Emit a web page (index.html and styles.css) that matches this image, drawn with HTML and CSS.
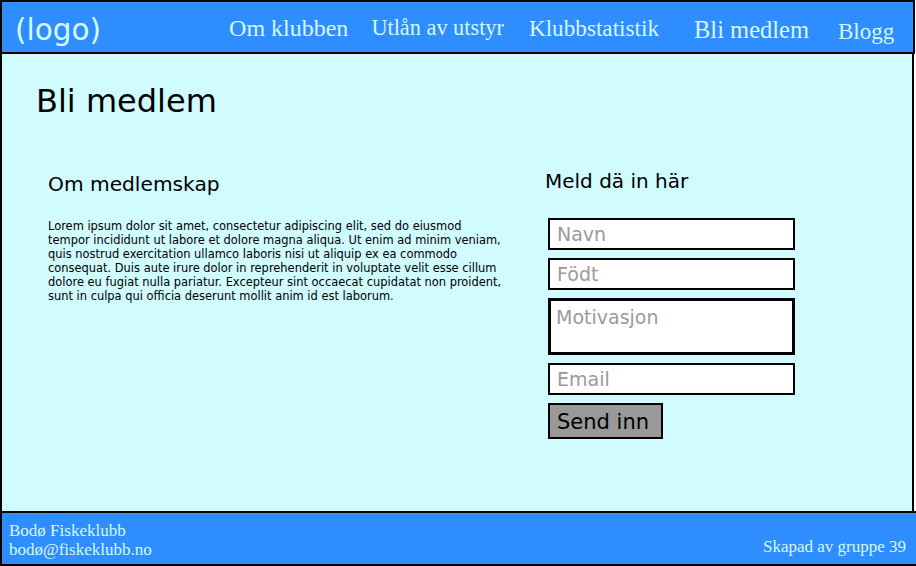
FILE: index.html
```html
<!DOCTYPE html>
<html lang="no">
<head>
<meta charset="utf-8">
<title>Bli medlem – Bodø Fiskeklubb</title>
<link rel="stylesheet" href="styles.css">
</head>
<body>
<div class="site">
  <header class="topbar">
    <div class="logo">(logo)</div>
    <nav class="nav">
      <a class="nav-link nav-om" href="#">Om klubben</a>
      <a class="nav-link nav-utlan" href="#">Utlån av utstyr</a>
      <a class="nav-link nav-stat" href="#">Klubbstatistik</a>
      <a class="nav-link nav-bli" href="#">Bli medlem</a>
      <a class="nav-link nav-blogg" href="#">Blogg</a>
    </nav>
  </header>
  <main class="content">
    <h1 class="page-title">Bli medlem</h1>
    <div class="columns">
      <section class="info">
        <h2 class="info-title">Om medlemskap</h2>
        <p class="info-text">Lorem ipsum dolor sit amet, consectetur adipiscing elit, sed do eiusmod tempor incididunt ut labore et dolore magna aliqua. Ut enim ad minim veniam, quis nostrud exercitation ullamco laboris nisi ut aliquip ex ea commodo consequat. Duis aute irure dolor in reprehenderit in voluptate velit esse cillum dolore eu fugiat nulla pariatur. Excepteur sint occaecat cupidatat non proident, sunt in culpa qui officia deserunt mollit anim id est laborum.</p>
      </section>
      <section class="signup">
        <h2 class="signup-title">Meld dä in här</h2>
        <form class="form">
          <input class="field" type="text" placeholder="Navn">
          <input class="field" type="text" placeholder="Födt">
          <textarea class="field field-area" placeholder="Motivasjon"></textarea>
          <input class="field" type="email" placeholder="Email">
          <button class="submit" type="button">Send inn</button>
        </form>
      </section>
    </div>
  </main>
  <footer class="footer">
    <div class="footer-info">
      <div>Bodø Fiskeklubb</div>
      <div>bodø@fiskeklubb.no</div>
    </div>
    <div class="footer-credit">Skapad av gruppe 39</div>
  </footer>
</div>
</body>
</html>
```

FILE: styles.css
```css
* { box-sizing: border-box; }

html, body {
  margin: 0;
  padding: 0;
  background: #ffffff;
}

body {
  font-family: "DejaVu Sans", Verdana, sans-serif;
  color: #000;
}

.site {
  width: 916px;
  height: 566px;
  display: flex;
  flex-direction: column;
}

/* Header */
.topbar {
  width: 915px;
  height: 54px;
  flex: 0 0 54px;
  background: #2e8eff;
  border: 2px solid #000;
  display: flex;
  align-items: flex-start;
  padding-left: 13px;
}

.logo {
  font-family: "DejaVu Sans", Verdana, sans-serif;
  font-size: 29.5px;
  line-height: 34px;
  color: #d6f8ff;
  margin-top: 11px;
}

.nav {
  display: flex;
  align-items: flex-start;
  margin-left: 128px;
}

.nav-link {
  font-family: "Liberation Serif", "Times New Roman", serif;
  color: #d6f8ff;
  text-decoration: none;
  line-height: 1;
  white-space: nowrap;
}

.nav-om { font-size: 24px; margin-top: 14px; }
.nav-utlan { font-size: 22.3px; margin-top: 15px; margin-left: 23px; }
.nav-stat { font-size: 23.2px; margin-top: 15px; margin-left: 25px; }
.nav-bli { font-size: 24.5px; margin-top: 16px; margin-left: 35px; }
.nav-blogg { font-size: 23px; margin-top: 18px; margin-left: 29px; }

/* Main */
.content {
  width: 914px;
  flex: 1 1 auto;
  background: #d0fbff;
  border-left: 2px solid #000;
  border-right: 2px solid #000;
  padding: 28px 0 0 34px;
}

.page-title {
  margin: 0;
  font-size: 32px;
  font-weight: normal;
  line-height: 38px;
}

.columns {
  display: grid;
  grid-template-columns: 457px 247px;
  column-gap: 40px;
  margin: 50px 0 0 12px;
  align-items: start;
}

.info { padding-top: 2px; }

.info-title {
  margin: 0;
  font-size: 20.2px;
  font-weight: normal;
  line-height: 24px;
}

.info-text {
  margin: 23px 0 0;
  font-size: 11.45px;
  line-height: 14.1px;
}

.signup-title {
  margin: 0;
  font-size: 20px;
  font-weight: normal;
  line-height: 22px;
}

.form {
  display: flex;
  flex-direction: column;
  align-items: flex-start;
  gap: 8px;
  margin: 26px 0 0 3px;
}

.field {
  width: 247px;
  height: 32px;
  border: 2px solid #000;
  background: #fff;
  font-family: "DejaVu Sans", Verdana, sans-serif;
  font-size: 19px;
  padding: 0 7px;
  margin: 0;
  outline: none;
  border-radius: 0;
}

.field::placeholder { color: #9a9a9a; opacity: 1; }

.field-area {
  height: 57px;
  border-width: 3px;
  padding: 5px;
  resize: none;
  overflow: hidden;
  line-height: 22px;
  display: block;
}

.submit {
  width: 115px;
  height: 36px;
  background: #999;
  border: 2px solid #000;
  border-radius: 0;
  font-family: "DejaVu Sans", Verdana, sans-serif;
  font-size: 21px;
  color: #000;
  text-align: left;
  padding: 2px 7px 0;
  margin: 0;
}

/* Footer */
.footer {
  width: 916px;
  height: 55px;
  flex: 0 0 55px;
  background: #2e8eff;
  border-top: 2px solid #000;
  border-bottom: 2px solid #000;
  border-left: 2px solid #000;
  display: flex;
  justify-content: space-between;
  align-items: flex-end;
  padding: 8px 10px 5px 7px;
  font-family: "Liberation Serif", "Times New Roman", serif;
  font-size: 17px;
  line-height: 19px;
  color: #d6f8ff;
}

.footer-credit { margin-bottom: 3px; }
```
